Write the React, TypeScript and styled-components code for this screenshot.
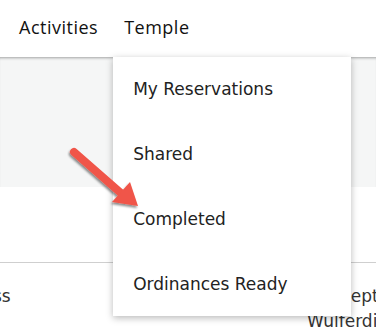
import { createGlobalStyle } from "styled-components";
import styled from "styled-components";

// === estilos base ===
const GlobalStyle = createGlobalStyle`
	body {
		margin: 0;
		background: #ffffff;
		font-family: "DejaVu Sans", Verdana, sans-serif;
		color: #222;
	}
`;

const Page = styled.div`
	position: relative;
	width: 376px;
	height: 329px;
	overflow: hidden;
	background: #ffffff;
`;

const NavBar = styled.nav`
	height: 57px;
	display: flex;
	align-items: flex-start;
	gap: 26px;
	padding: 16px 0 0 19px;
	box-sizing: border-box;
`;

const NavItem = styled.div`
	position: relative;
	font-family: "Open Sans", sans-serif;
	font-size: 18px;
	letter-spacing: 0.5px;
	line-height: 22px;
	color: #111;
`;

const Banner = styled.div`
	height: 130px;
	background: #f5f6f6;
	box-shadow: inset 0 3px 3px -2px rgba(0, 0, 0, 0.35);
`;

const Blank = styled.div`
	height: 75px;
	border-bottom: 1px solid #cfcfcf;
`;

const Row = styled.div`
	display: grid;
	grid-template-columns: 307px 1fr;
	padding-top: 21px;
	font-size: 17px;
	line-height: 25px;
	color: #333;
	white-space: nowrap;
`;

const CutLeft = styled.span`
	margin-left: -57px;
`;

const Stack = styled.div`
	display: flex;
	flex-direction: column;
	align-items: flex-start;
`;

const StackLine = styled.span<{ $indent?: number }>`
	margin-left: ${(p) => p.$indent ?? 0}px;
`;

const Menu = styled.div`
	position: absolute;
	left: -11px;
	top: 41px;
	width: 238px;
	height: 259px;
	background: #ffffff;
	box-shadow: 0 2px 7px rgba(0, 0, 0, 0.28);
	display: flex;
	flex-direction: column;
	gap: 37px;
	padding-top: 18px;
	box-sizing: border-box;
	z-index: 2;
	letter-spacing: 0;
`;

const MenuItem = styled.div`
	padding-left: 20px;
	font-family: "DejaVu Sans", Verdana, sans-serif;
	font-size: 17px;
	color: #222;
	line-height: 28px;
	white-space: nowrap;
`;

const Arrow = styled.svg`
	position: absolute;
	left: 60px;
	top: 140px;
	z-index: 3;
`;

const items = ["My Reservations", "Shared", "Completed", "Ordinances Ready"];

export default function App() {
	return (
		<Page>
			<GlobalStyle />
			<NavBar>
				<NavItem>Activities</NavItem>
				<NavItem>
					Temple
					<Menu>
						{items.map((label) => (
							<MenuItem key={label}>{label}</MenuItem>
						))}
					</Menu>
				</NavItem>
			</NavBar>
			<Banner />
			<Blank />
			<Row>
				<div>
					<CutLeft>Address</CutLeft>
				</div>
				<Stack>
					<StackLine $indent={33}>September</StackLine>
					<StackLine>Wulferding</StackLine>
				</Stack>
			</Row>
			{/* flecha roja de anotacion */}
			<Arrow width="90" height="80" viewBox="0 0 90 80">
				<defs>
					<filter id="sh" x="-20%" y="-20%" width="140%" height="140%">
						<feDropShadow dx="-1" dy="2" stdDeviation="1.2" floodColor="#000" floodOpacity="0.45" />
					</filter>
				</defs>
				<g filter="url(#sh)">
					<line x1="14" y1="12" x2="62" y2="54" stroke="#f05548" strokeWidth="8" strokeLinecap="round" />
					<polygon points="78,66 52,62 70,42" fill="#f05548" />
				</g>
			</Arrow>
		</Page>
	);
}
